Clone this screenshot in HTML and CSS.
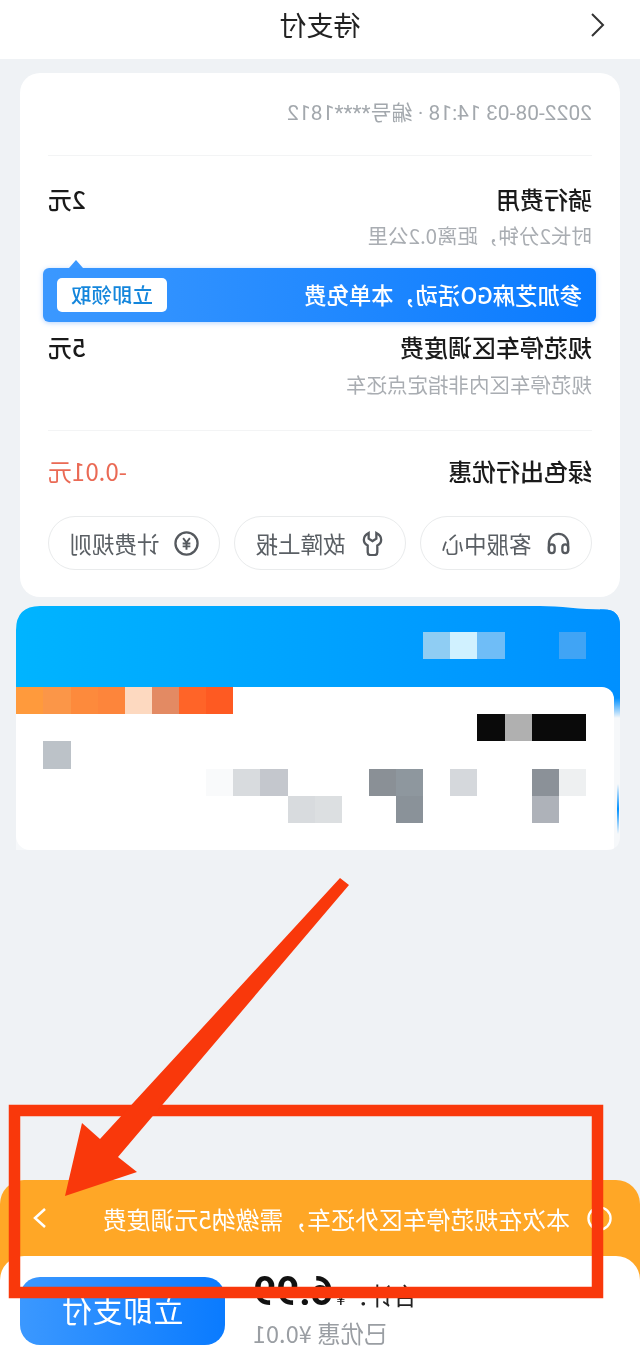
FILE: index.html
```html
<!DOCTYPE html>
<html lang="zh">
<head>
<meta charset="utf-8">
<title>待支付</title>
<link rel="stylesheet" href="styles.css">
</head>
<body>
<div class="page">
  <header class="topbar">
    <svg class="back" viewBox="0 0 16 24"><path d="M14 1 3 12l11 11"/></svg>
    <h1 class="title">待支付</h1>
  </header>

  <section class="card">
    <p class="meta">2022-08-03 14:18 · 编号****1812</p>
    <div class="divider first"></div>
    <div class="row r-ride"><span class="name">骑行费用</span><span class="price">2元</span></div>
    <p class="sub">时长2分钟，距离0.2公里</p>
    <div class="promo">
      <span class="promo-text">参加芝麻GO活动，本单免费</span>
      <span class="promo-btn">立即领取</span>
    </div>
    <div class="row r-fee"><span class="name">规范停车区调度费</span><span class="price">5元</span></div>
    <p class="sub sub-fee">规范停车区内非指定点还车</p>
    <div class="divider second"></div>
    <div class="row r-disc"><span class="name">绿色出行优惠</span><span class="price minus">-0.01元</span></div>
    <div class="pills">
      <div class="pill">
        <svg class="ico" viewBox="0 0 26 26"><path d="M3 21v-8a10 10 0 0 1 20 0v8"/><rect x="3" y="14" width="6" height="9" rx="3"/><rect x="17" y="14" width="6" height="9" rx="3"/></svg>
        <span>客服中心</span>
      </div>
      <div class="pill">
        <svg class="ico" viewBox="0 0 26 26"><path d="M9 2v6l4 2.500L17 8V2c3 1.500 5 4 5 7 0 3-2 5-4 6v7a3 3 0 0 1-3 3h-4a3 3 0 0 1-3-3v-7c-2-1-4-3-4-6 0-3 2-5.500 5-7z"/></svg>
        <span>故障上报</span>
      </div>
      <div class="pill">
        <svg class="ico" viewBox="0 0 26 26"><circle cx="13" cy="13" r="11.500"/><path class="thin" d="m9.500 7.500 3.500 4.500 3.500-4.500M9 13h8M9 16h8M13 12v7.500"/></svg>
        <span>计费规则</span>
      </div>
    </div>
  </section>

  <section class="panel">
    <div class="panel-head">
      <div class="mosaic one">
        <i class="c1 h1"></i><i class="c4 h2"></i><i class="c5 h3"></i><i class="c6 h4"></i>
      </div>
    </div>
    <div class="panel-body">
      <div class="mosaic five">
        <i class="c14 a1 y1"></i><i class="c15 a2 y1"></i><i class="c16 a3 y1"></i><i class="c17 a4 y1"></i><i class="c18 a5 y1"></i><i class="c19 a6 y1"></i><i class="c20 a7 y1"></i><i class="c21 a8 y1"></i>
        <i class="c1 k y2"></i><i class="c2 k y2"></i><i class="c3 g1 y2"></i><i class="c4 k y2"></i>
        <i class="c20 g2 y3"></i>
        <i class="c1 g3 y4"></i><i class="c2 g4 y4"></i><i class="c5 g5 y4"></i><i class="c7 g6 y4"></i><i class="c8 g7 y4"></i><i class="c12 g8 y4"></i><i class="c13 g9 y4"></i><i class="c14 g10 y4"></i>
        <i class="c2 g11 y5"></i><i class="c7 g12 y5"></i><i class="c10 g13 y5"></i><i class="c11 g14 y5"></i>
      </div>
    </div>
  </section>

  <footer class="footer">
    <div class="notice">
      <svg class="notice-ico" viewBox="0 0 26 26"><circle cx="13" cy="13" r="11.500"/></svg>
      <span class="notice-text">本次在规范停车区外还车，需缴纳5元调度费</span>
      <svg class="notice-arrow" viewBox="0 0 14 22"><path d="m2 2 10 9-10 9"/></svg>
    </div>
    <div class="sheet">
      <div class="sum">
        <div class="total"><span class="total-label">合计：</span><span class="yen">¥</span><span class="amount">6.99</span></div>
        <div class="saved">已优惠 ¥0.01</div>
      </div>
      <div class="pay">立即支付</div>
    </div>
  </footer>
</div>

<svg class="markup" viewBox="0 0 640 1365" aria-hidden="true">
  <rect class="frame" x="14.500" y="1110.500" width="583" height="182"/>
  <path class="arrow" d="M65 1196 82 1123 100 1139 340 878 349 885 118 1157 137 1172z"/>
</svg>
</body>
</html>
```

FILE: styles.css
```css
* { box-sizing: border-box; }
html, body { margin: 0; padding: 0; background: #eff2f5; }
body { width: 640px; height: 1365px; overflow: hidden; position: relative; font-family: "Noto Sans CJK SC", "Noto Sans", sans-serif; color: #111; }

.page { width: 640px; height: 1365px; display: flex; flex-direction: column; transform: scaleX(-1); }

.topbar { height: 59px; flex: none; background: #fff; display: grid; grid-template-columns: 1fr auto 1fr; align-items: center; padding: 0 34px; }
.back { width: 16px; height: 24px; margin-bottom: 9px; fill: none; stroke: #333; stroke-width: 2; }
.title { grid-column: 2; margin: 0 0 10px; font-size: 27px; line-height: 36px; font-weight: 400; color: #222; }

.card { flex: none; margin: 14px 20px 0; height: 524px; padding: 26px 28px 0; background: #fff; border-radius: 20px; }
.meta { margin: 0; font-size: 21px; line-height: 28px; color: #a3a8ad; font-family: Roboto, "Noto Sans CJK SC", sans-serif; }
.divider { height: 1px; background: #f3f4f5; }
.first { margin-top: 28px; }
.second { margin-top: 33px; }
.row { display: flex; justify-content: space-between; align-items: center; line-height: 30px; }
.r-ride { margin-top: 28px; }
.r-fee { margin-top: 10px; }
.r-disc { margin-top: 25px; }
.name { font-size: 24px; font-weight: 500; color: #1a1a1a; }
.price { font-size: 24px; font-weight: 500; color: #1a1a1a; }
.minus { font-weight: 400; color: #ea6a55; }
.sub { margin: 8px 0 0; font-size: 20.500px; line-height: 26px; color: #a9adb2; }
.sub-fee { margin-top: 9px; }

.promo { position: relative; margin: 20px -5px 0 -4px; height: 54px; padding: 0 14px 0 14px; display: flex; justify-content: space-between; align-items: center; border-radius: 6px; background: linear-gradient(90deg, #0a7bff, #3b98ff); box-shadow: 0 1px 5px rgba(40, 130, 255, .35); }
.promo::after { content: ""; position: absolute; top: -8px; right: 26px; width: 0; height: 0; border: 7px solid transparent; border-top: 0; border-bottom: 8px solid #3b98ff; }
.promo-text { margin-bottom: 3px; font-size: 22.300px; font-weight: 500; color: #fff; }
.promo-btn { width: 110px; height: 34px; border-radius: 5px; background: #fff; color: #1486dc; font-size: 20.500px; font-weight: 500; line-height: 32px; text-align: center; }

.pills { margin-top: 30px; display: flex; justify-content: space-between; }
.pill { width: 172px; height: 54px; border: 1.500px solid #e9ebec; border-radius: 27px; display: flex; align-items: center; justify-content: center; gap: 14px; font-size: 22.500px; color: #5a5f64; }
.ico { width: 25px; height: 25px; fill: none; stroke: #55595e; stroke-width: 2.400; }
.ico .thin { stroke-width: 2; }

.panel { flex: none; margin: 9px 0 0 20px; width: 604px; height: 244px; clip-path: path("M0 20Q0 3.500 16 3.500C40 3.500 60 0 80 0L580 0Q604 0 604 24L604 244L14 244Q0 244 0 230Z"); background: linear-gradient(transparent, #0090ff 50%, transparent) 1px 178px / 2px 50px no-repeat, linear-gradient(#0090ff 92px, rgba(0,144,255,0) 112px) 0 0 / 20px 100% no-repeat, #f6f8fa; }
.panel-head { height: 81px; padding: 26px 0 0 34px; background: linear-gradient(90deg, #0090ff, #00b4ff); }
.panel-body { margin-left: 6px; height: 163px; padding-left: 28px; background: #fff; border-radius: 12px 0 14px 0; }
.mosaic { display: grid; grid-template-columns: repeat(21, 27.140px); grid-auto-rows: 27.200px; }
.mosaic i { display: block; }
.c1 { grid-column: 1; } .c2 { grid-column: 2; } .c3 { grid-column: 3; } .c4 { grid-column: 4; } .c5 { grid-column: 5; } .c6 { grid-column: 6; } .c7 { grid-column: 7; } .c8 { grid-column: 8; } .c10 { grid-column: 10; } .c11 { grid-column: 11; } .c12 { grid-column: 12; } .c13 { grid-column: 13; } .c14 { grid-column: 14; } .c15 { grid-column: 15; } .c16 { grid-column: 16; } .c17 { grid-column: 17; } .c18 { grid-column: 18; } .c19 { grid-column: 19; } .c20 { grid-column: 20; } .c21 { grid-column: 21; }
.y1 { grid-row: 1; } .y2 { grid-row: 2; } .y3 { grid-row: 3; } .y4 { grid-row: 4; } .y5 { grid-row: 5; }
.one i { grid-row: 1; }
.h1 { background: #40a4f5; } .h2 { background: #6fbdf7; } .h3 { background: #d0f1ff; } .h4 { background: #8fcdf3; }
.a1 { background: #fe5a22; } .a2 { background: #ff6428; } .a3 { background: #e38a63; } .a4 { background: #fdd9c0; } .a5 { background: #fd853b; } .a6 { background: #fd8a3c; } .a7 { background: #fb9648; } .a8 { background: #ff9a3c; }
.k { background: #0a0a0a; }
.g1 { background: #b0b0b0; } .g2 { background: #bcc2c8; } .g3 { background: #eef0f1; } .g4 { background: #8b9198; } .g5 { background: #d5d8dc; } .g6 { background: #8e979e; } .g7 { background: #8a9096; } .g8 { background: #c4c7cd; } .g9 { background: #d8dbde; } .g10 { background: #f9fafb; }
.g11 { background: #aeb2b9; } .g12 { background: #8a9299; } .g13 { background: #dcdfe1; } .g14 { background: #d8dbde; }

.footer { flex: none; margin-top: auto; height: 185px; background: #ffa726; border-radius: 24px 24px 0 0; display: flex; flex-direction: column; }
.notice { height: 76px; flex: none; display: flex; align-items: center; padding: 0 33px 0 28px; color: #fff; }
.notice-ico { width: 25px; height: 25px; fill: none; stroke: #fff; stroke-width: 2.400; flex: none; }
.notice-text { margin-left: 17px; font-size: 23.900px; white-space: nowrap; }
.notice-arrow { margin-left: auto; width: 14px; height: 22px; fill: none; stroke: #fff; stroke-width: 2.500; }
.sheet { flex: 1; background: #fff; border-radius: 24px 24px 0 0; display: flex; justify-content: flex-end; gap: 28px; padding: 21px 20px 0 0; }
.sum { display: flex; flex-direction: column; align-items: flex-end; }
.total { display: flex; align-items: baseline; height: 46px; line-height: 46px; margin-top: -8px; }
.total-label { font-size: 24px; color: #222; }
.yen { font-size: 16px; color: #111; margin-right: 3px; }
.amount { font-family: Roboto, sans-serif; font-size: 40px; font-weight: 700; color: #111; }
.saved { margin-top: 3px; font-size: 23.500px; line-height: 30px; color: #9a9ea3; }
.pay { width: 205px; height: 68px; border-radius: 20px; background: linear-gradient(90deg, #0a7bff, #3b98ff); color: #fff; font-size: 30px; line-height: 64px; text-align: center; letter-spacing: .5px; }

.markup { position: absolute; left: 0; top: 0; width: 640px; height: 1365px; pointer-events: none; }
.frame { fill: none; stroke: #f9380b; stroke-width: 11.500; }
.arrow { fill: #f9380b; }
```
